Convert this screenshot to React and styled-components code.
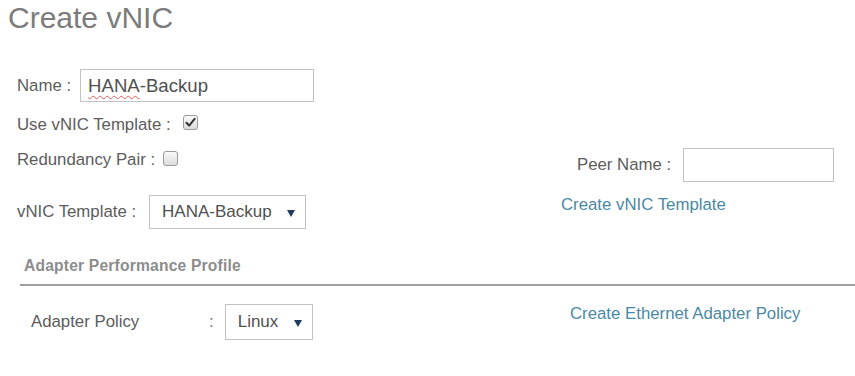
import React from "react";
import styled, { createGlobalStyle } from "styled-components";

const GlobalStyle = createGlobalStyle`
  html, body {
    margin: 0;
    padding: 0;
    background: #ffffff;
  }
  body {
    font-family: "Liberation Sans", Arial, sans-serif;
    color: #5a5a5a;
  }
`;

const Page = styled.div`
  width: 855px;
  height: 376px;
  overflow: hidden;
  padding-left: 8px;
  box-sizing: border-box;
`;

const Title = styled.h1`
  margin: 0;
  font-size: 30px;
  line-height: 36px;
  font-weight: 400;
  color: #7c7c7c;
`;

const Row = styled.div`
  display: flex;
  align-items: flex-start;
  height: ${(p) => p.h}px;
  margin-top: ${(p) => p.top}px;
  padding-left: 9px;
`;

const Left = styled.div`
  display: flex;
  align-items: center;
  gap: ${(p) => p.gap ?? 10}px;
  width: ${(p) => p.w}px;
  height: ${(p) => p.h}px;
  margin-top: ${(p) => p.mt || 0}px;
  flex-shrink: 0;
`;

const Right = styled.div`
  display: flex;
  align-items: center;
  gap: 12px;
`;

const Label = styled.span`
  font-size: 16.8px;
  line-height: 22px;
  color: #5c5c5c;
  white-space: nowrap;
`;

const PolicyLabel = styled(Label)`
  box-sizing: border-box;
  width: 192px;
  padding-left: 14px;
`;

const TextBox = styled.div`
  box-sizing: border-box;
  width: ${(p) => p.w}px;
  height: ${(p) => p.h}px;
  border: 1px solid #c2c2c2;
  background: #ffffff;
  display: flex;
  align-items: center;
  padding-left: 7px;
  font-size: 18.6px;
  color: #505050;
`;

const Squiggle = styled.span`
  text-decoration: underline wavy #e05a5a;
  text-decoration-thickness: 1px;
  text-underline-offset: 3px;
`;

const Select = styled.div`
  box-sizing: border-box;
  width: ${(p) => p.w}px;
  height: ${(p) => p.h}px;
  border: 1px solid #c2c2c2;
  background: #ffffff;
  display: flex;
  align-items: center;
  justify-content: space-between;
  padding: 0 10px 0 12px;
  font-size: 17px;
  color: #505050;
`;

const Arrow = styled.span`
  width: 0;
  height: 0;
  border-left: 4px solid transparent;
  border-right: 4px solid transparent;
  border-top: 7px solid #1f3a5c;
  margin-top: 2px;
`;

const Check = styled.span`
  box-sizing: border-box;
  width: 15px;
  height: 15px;
  border: 1px solid #9a9a9a;
  border-radius: 3px;
  background: linear-gradient(#fafafa, #dcdcdc);
  display: inline-flex;
  align-items: center;
  justify-content: center;
  margin-top: ${(p) => p.mt || 0}px;
`;

const Link = styled.a`
  font-size: 16.8px;
  line-height: 20px;
  color: #4a89a5;
  text-decoration: none;
  cursor: pointer;
  white-space: nowrap;
`;

const Section = styled.div`
  margin: 27px 0 0 12px;
  padding: 0 0 8px 4px;
  border-bottom: 2px solid #a0a0a0;
`;

const SectionTitle = styled.span`
  font-size: 15.6px;
  line-height: 20px;
  font-weight: 700;
  color: #8c8c8c;
  letter-spacing: 0.2px;
`;

const Colon = styled.span`
  font-size: 16.8px;
  color: #777777;
  margin-right: 11px;
`;

const CheckMark = () => (
  <svg width="11" height="11" viewBox="0 0 11 11">
    <path
      d="M1.5 5.8 L4.2 8.6 L9.6 1.8"
      fill="none"
      stroke="#333"
      strokeWidth="2"
      strokeLinecap="round"
      strokeLinejoin="round"
    />
  </svg>
);

export default function App() {
  return (
    <>
      <GlobalStyle />
      <Page>
        <Title>Create vNIC</Title>

        <Row h={33} top={33}>
          <Left w={300} h={33} gap={9}>
            <Label>Name :</Label>
            <TextBox w={234} h={33}>
              <span>
                <Squiggle>HANA</Squiggle>-Backup
              </span>
            </TextBox>
          </Left>
        </Row>

        <Row h={22} top={12}>
          <Left w={300} h={22} gap={12}>
            <Label>Use vNIC Template :</Label>
            <Check mt={-5}>
              <CheckMark />
            </Check>
          </Left>
        </Row>

        <Row h={34} top={12}>
          <Left w={560} h={22} gap={8} mt={1}>
            <Label>Redundancy Pair :</Label>
            <Check mt={-3} />
          </Left>
          <Right>
            <Label>Peer Name :</Label>
            <TextBox w={151} h={34} />
          </Right>
        </Row>

        <Row h={34} top={13}>
          <Left w={544} h={34} gap={13}>
            <Label>vNIC Template :</Label>
            <Select w={157} h={34}>
              <span>HANA-Backup</span>
              <Arrow />
            </Select>
          </Left>
          <Link>Create vNIC Template</Link>
        </Row>

        <Section>
          <SectionTitle>Adapter Performance Profile</SectionTitle>
        </Section>

        <Row h={36} top={18}>
          <Left w={553} h={36} gap={0}>
            <PolicyLabel>Adapter Policy</PolicyLabel>
            <Colon>:</Colon>
            <Select w={88} h={36}>
              <span>Linux</span>
              <Arrow />
            </Select>
          </Left>
          <Link>Create Ethernet Adapter Policy</Link>
        </Row>
      </Page>
    </>
  );
}
